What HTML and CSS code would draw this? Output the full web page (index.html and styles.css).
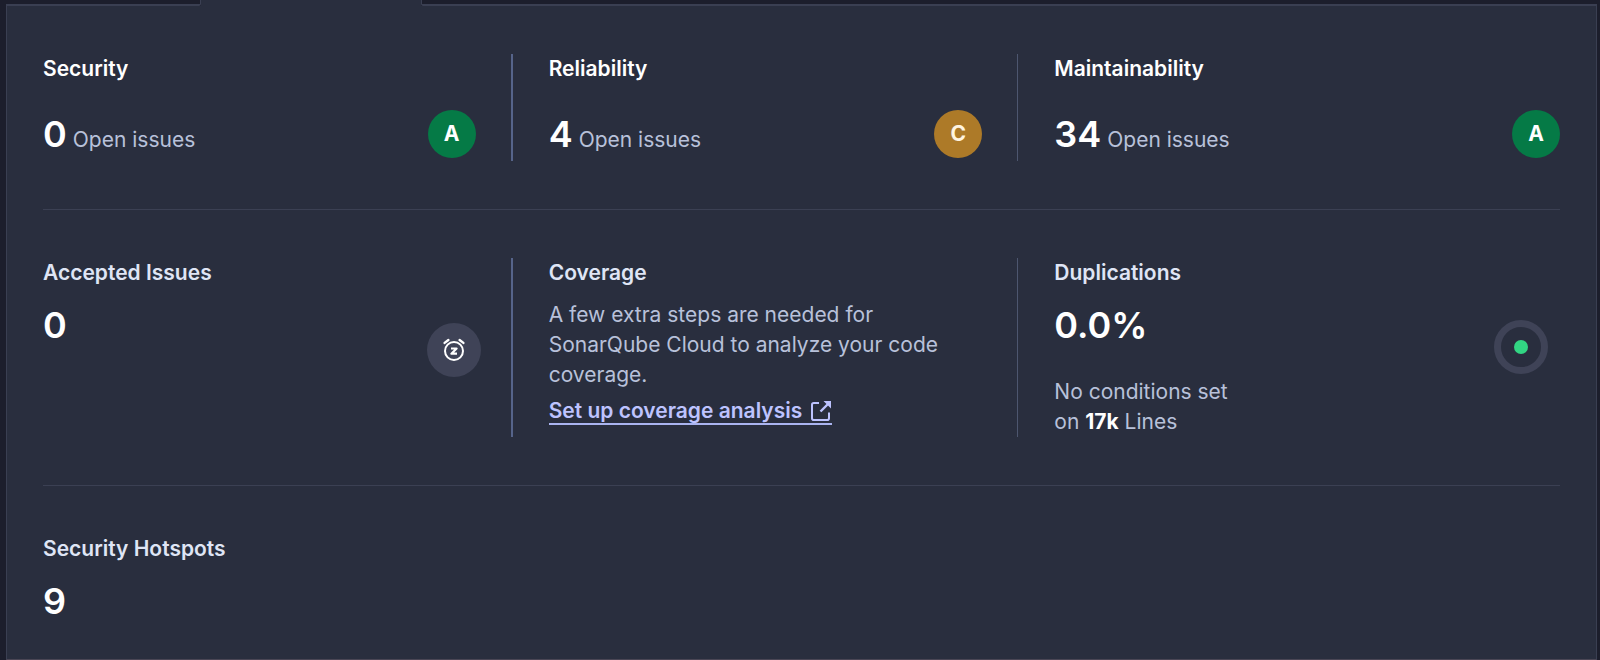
FILE: index.html
```html
<!DOCTYPE html>
<html lang="en">
<head>
<meta charset="utf-8">
<meta name="viewport" content="width=device-width, initial-scale=1">
<title>Code overview</title>
<link rel="stylesheet" href="styles.css">
</head>
<body>
<main class="overview">
  <div class="tab-edge">
    <div class="tab-edge-before"></div>
    <div class="tab-edge-active"></div>
    <div class="tab-edge-after"></div>
  </div>
  <div class="panel">
    <section class="row row-ratings">
      <article class="cell">
        <h2 class="title title-strong">Security</h2>
        <div class="rating-line">
          <p class="count"><span class="value">0</span> <span class="label">Open issues</span></p>
          <span class="rating rating-a">A</span>
        </div>
      </article>
      <article class="cell">
        <h2 class="title title-strong">Reliability</h2>
        <div class="rating-line">
          <p class="count"><span class="value">4</span> <span class="label">Open issues</span></p>
          <span class="rating rating-c">C</span>
        </div>
      </article>
      <article class="cell">
        <h2 class="title title-strong">Maintainability</h2>
        <div class="rating-line">
          <p class="count"><span class="value">34</span> <span class="label">Open issues</span></p>
          <span class="rating rating-a">A</span>
        </div>
      </article>
    </section>

    <section class="row">
      <article class="cell cell-accepted">
        <h2 class="title">Accepted Issues</h2>
        <div class="measure">
          <p class="value">0</p>
          <span class="indicator snooze">
            <svg width="24" height="24" viewBox="0 0 24 24" fill="none" stroke="currentColor" stroke-width="2" aria-hidden="true">
              <circle cx="12" cy="13" r="9"/>
              <path d="M2.600 4.900 6.400 2M21.400 4.900 17.600 2" stroke-width="2.400" stroke-linecap="round"/>
              <path d="M9 10.500h5.600L9.400 15.700H15" stroke-width="2.200" stroke-linejoin="round"/>
            </svg>
          </span>
        </div>
      </article>
      <article class="cell">
        <h2 class="title">Coverage</h2>
        <p class="note">A few extra steps are needed for SonarQube Cloud to analyze your code coverage.</p>
        <a class="setup" href="#coverage">Set up coverage analysis<svg width="22" height="22" viewBox="0 0 22 22" fill="none" stroke="currentColor" stroke-width="2" aria-hidden="true"><path d="M9 3H3.800A1.800 1.800 0 0 0 2 4.800V18.200A1.800 1.800 0 0 0 3.800 20H17.200A1.800 1.800 0 0 0 19 18.200V12.500"/><path d="M10.500 11.500 18 4" stroke-width="2.400"/><path d="M13.500 1H21V8.500Z" fill="currentColor" stroke="none"/></svg></a>
      </article>
      <article class="cell">
        <h2 class="title">Duplications</h2>
        <div class="measure measure-inset">
          <div>
            <p class="value">0.0%</p>
            <p class="conditions">No conditions set<br>on <strong>17k</strong> Lines</p>
          </div>
          <span class="indicator ring"><span class="dot"></span></span>
        </div>
      </article>
    </section>

    <section class="row">
      <article class="cell">
        <h2 class="title">Security Hotspots</h2>
        <p class="value">9</p>
      </article>
    </section>
  </div>
</main>
</body>
</html>
```
FILE: styles.css
```css
* {
  box-sizing: border-box;
}

body {
  margin: 0;
  background: #1c1e2c;
  color: #b8c1da;
  font-family: Inter, "Liberation Sans", sans-serif;
  font-size: 21px;
  line-height: 30px;
}

h2,
p {
  margin: 0;
}

.overview {
  padding: 0 3px 0 6px;
}

.tab-edge {
  display: flex;
  height: 6px;
}

.tab-edge-before,
.tab-edge-after {
  border: 0 solid #3a3f52;
  border-bottom-width: 2px;
}

.tab-edge-before {
  width: 195px;
  border-right-width: 1px;
  border-bottom-right-radius: 2px;
}

.tab-edge-active {
  width: 220px;
  background: #292e3e;
}

.tab-edge-after {
  flex: 1;
  border-left-width: 1px;
  border-bottom-left-radius: 2px;
}

.panel {
  padding: 0 36px;
  background: #292e3e;
  border: 1px solid #3a3f52;
  border-top: 0;
  border-bottom-color: #4a4655;
}

.row {
  display: grid;
  grid-template-columns: repeat(3, 1fr);
  padding: 48px 0;
  border-bottom: 1px solid #3b4053;
}

.row:last-child {
  padding-bottom: 33px;
  border-bottom: 0;
}

.cell {
  margin-right: 36px;
  padding-right: 35px;
  border-right: 1px solid #4d566f;
}

.cell:first-child {
  border-right: 2px solid #56648a;
}

.row .cell:last-child {
  margin-right: 0;
  padding-right: 0;
  border-right: 0;
}

.row .cell-accepted {
  padding-right: 30px;
}

.row-ratings .cell {
  min-height: 107px;
}

.title {
  margin-bottom: 12px;
  color: #dfe5f5;
  font-size: 21px;
  font-weight: 600;
}

.title-strong {
  margin-bottom: 26px;
  color: #fff;
}

.value {
  color: #fff;
  font-size: 36px;
  font-weight: 600;
  line-height: 50px;
}

.rating-line {
  display: flex;
  align-items: center;
  justify-content: space-between;
  height: 48px;
}

.count {
  display: flex;
  align-items: baseline;
  gap: 6px;
}

.rating {
  width: 48px;
  height: 48px;
  border-radius: 50%;
  color: #fff;
  font-weight: 700;
  line-height: 48px;
  text-align: center;
}

.rating-a {
  background: #057a46;
}

.rating-c {
  background: #ad7a28;
  color: #fff4e0;
}

.measure {
  display: flex;
  align-items: flex-start;
  justify-content: space-between;
}

.measure-inset {
  padding-right: 12px;
}

.indicator {
  display: flex;
  align-items: center;
  justify-content: center;
  width: 54px;
  height: 54px;
  border-radius: 50%;
}

.snooze {
  margin-top: 23px;
  background: #3f4357;
  color: #fff;
}

.ring {
  margin-top: 20px;
  border: 7px solid #3f4357;
}

.dot {
  width: 14px;
  height: 14px;
  border-radius: 50%;
  background: #32d583;
}

.note {
  margin-bottom: 6px;
}

.setup {
  display: inline-flex;
  align-items: center;
  gap: 8px;
  height: 26px;
  border-bottom: 2px solid #aab4f0;
  color: #bdc3ff;
  font-weight: 600;
  text-decoration: none;
}

.conditions {
  margin-top: 27px;
}

.conditions strong {
  color: #fff;
  font-weight: 700;
}
```
